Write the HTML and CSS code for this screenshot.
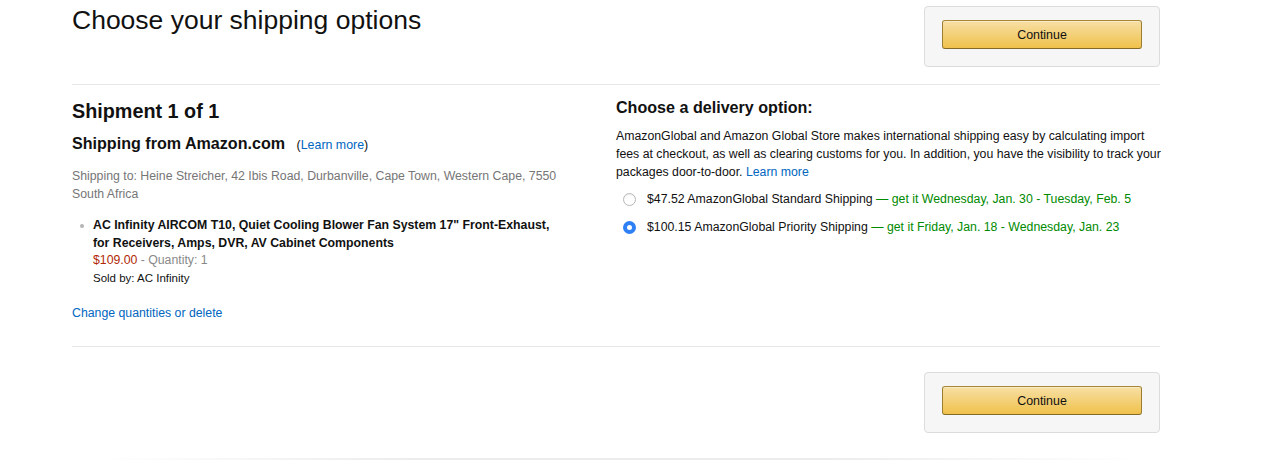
FILE: index.html
```html
<!DOCTYPE html>
<html>
<head>
<meta charset="utf-8">
<link rel="stylesheet" href="styles.css">
</head>
<body>
<div class="page">
  <div class="header">
    <h1 class="title">Choose your shipping options</h1>
    <div class="cont-box"><button class="btn">Continue</button></div>
  </div>
  <hr class="divider">
  <div class="shipment">
    <div class="left">
      <h2 class="ship-title">Shipment 1 of 1</h2>
      <h3 class="ship-from">Shipping from Amazon.com <span class="paren">(<a class="link">Learn more</a>)</span></h3>
      <p class="address">Shipping to: Heine Streicher, 42 Ibis Road, Durbanville, Cape Town, Western Cape, 7550 South Africa</p>
      <ul class="items">
        <li>
          <div class="item-name">AC Infinity AIRCOM T10, Quiet Cooling Blower Fan System 17" Front-Exhaust, for Receivers, Amps, DVR, AV Cabinet Components</div>
          <div><span class="price">$109.00</span> <span class="muted">- Quantity: 1</span></div>
          <div class="sold">Sold by: AC Infinity</div>
        </li>
      </ul>
      <a class="link change">Change quantities or delete</a>
    </div>
    <div class="right">
      <h3 class="opt-title">Choose a delivery option:</h3>
      <p class="desc">AmazonGlobal and Amazon Global Store makes international shipping easy by calculating import fees at checkout, as well as clearing customs for you. In addition, you have the visibility to track your packages door-to-door. <a class="link">Learn more</a></p>
      <label class="opt"><span class="radio"></span><span>$47.52 AmazonGlobal Standard Shipping <span class="green">— get it Wednesday, Jan. 30 - Tuesday, Feb. 5</span></span></label>
      <label class="opt"><span class="radio checked"></span><span>$100.15 AmazonGlobal Priority Shipping <span class="green">— get it Friday, Jan. 18 - Wednesday, Jan. 23</span></span></label>
    </div>
  </div>
  <hr class="divider">
  <div class="footer">
    <div class="cont-box"><button class="btn">Continue</button></div>
  </div>
</div>
<div class="fade-line"></div>
</body>
</html>
```

FILE: styles.css
```css
html, body {
  margin: 0;
  padding: 0;
  background: #fff;
  font-family: "Liberation Sans", Arial, sans-serif;
  color: #111;
  overflow: hidden;
}
.page {
  width: 1088px;
  margin-left: 72px;
}
.header {
  display: flex;
  justify-content: space-between;
  align-items: flex-start;
  height: 84px;
}
.title {
  margin: 3px 0 0 0;
  font-size: 26.5px;
  line-height: 34px;
  font-weight: 400;
  color: #111;
}
.cont-box {
  margin-top: 6px;
  width: 200px;
  padding: 13px 17px 17px 17px;
  background: #f6f6f6;
  border: 1px solid #dcdcdc;
  border-radius: 4px;
}
.btn {
  display: block;
  width: 200px;
  height: 29px;
  padding: 0;
  margin: 0;
  font-family: "Liberation Sans", Arial, sans-serif;
  font-size: 12.4px;
  color: #111;
  background: linear-gradient(to bottom, #f7dfa5, #f0c14b);
  border: 1px solid;
  border-color: #a88734 #9c7e31 #846a29;
  border-radius: 3px;
  box-shadow: inset 0 1px 0 rgba(255,255,255,0.4);
}
.divider {
  margin: 0;
  border: 0;
  height: 1px;
  background: #e7e7e7;
}
.shipment {
  display: grid;
  grid-template-columns: 544px 544px;
  height: 261px;
}
.left {
  padding-right: 54px;
}
.ship-title {
  margin: 13px 0 0 0;
  font-size: 19.8px;
  line-height: 26px;
  font-weight: 700;
  color: #111;
}
.ship-from {
  margin: 8px 0 0 0;
  font-size: 16.1px;
  line-height: 22px;
  font-weight: 700;
  color: #111;
}
.paren {
  font-size: 12.4px;
  font-weight: 400;
  margin-left: 7px;
}
.link {
  color: #0066c0;
  text-decoration: none;
}
.address {
  margin: 12px 0 0 0;
  font-size: 12.3px;
  line-height: 17.5px;
  color: #767676;
}
.items {
  margin: 14px 0 0 0;
  padding-left: 21px;
  font-size: 11.5px;
  line-height: 17.5px;
  list-style: none;
}
.items li {
  position: relative;
}
.items li::before {
  content: "";
  position: absolute;
  left: -13px;
  top: 7px;
  width: 4px;
  height: 4px;
  border-radius: 50%;
  background: #b4b4b4;
}
.item-name {
  font-size: 12.3px;
  font-weight: 700;
  color: #111;
}
.price {
  color: #b12704;
  font-size: 12.3px;
}
.muted {
  color: #888;
  font-size: 12.3px;
}
.sold {
  font-size: 11.5px;
  color: #111;
}
.change {
  display: block;
  margin-top: 17px;
  font-size: 12.3px;
  line-height: 18px;
}
.right {
  margin-right: -8px;
}
.opt-title {
  margin: 11px 0 0 0;
  font-size: 16.1px;
  line-height: 22px;
  font-weight: 700;
  color: #111;
}
.desc {
  margin: 9px 0 0 0;
  font-size: 12.3px;
  line-height: 18px;
  color: #111;
}
.opt {
  display: flex;
  align-items: center;
  gap: 11px;
  margin-top: 9px;
  padding-left: 7px;
  font-size: 12.3px;
  line-height: 18px;
  color: #111;
}
.opt + .opt {
  margin-top: 10px;
}
.radio {
  box-sizing: border-box;
  flex: none;
  width: 13px;
  height: 13px;
  border-radius: 50%;
  border: 1px solid #b8b8b8;
  background: #fff;
  box-shadow: inset 0 1px 1px rgba(0,0,0,0.08);
}
.radio.checked {
  border: 4.5px solid #2f7ff5;
  background: #fff;
  box-shadow: none;
}
.green {
  color: #008a00;
}
.footer {
  display: flex;
  justify-content: flex-end;
  padding-top: 19px;
}
.fade-line {
  position: absolute;
  left: 100px;
  top: 458px;
  width: 1040px;
  height: 2px;
  background: linear-gradient(to right, rgba(230,230,230,0), #ececec 30%, #ececec 70%, rgba(230,230,230,0));
}
```
